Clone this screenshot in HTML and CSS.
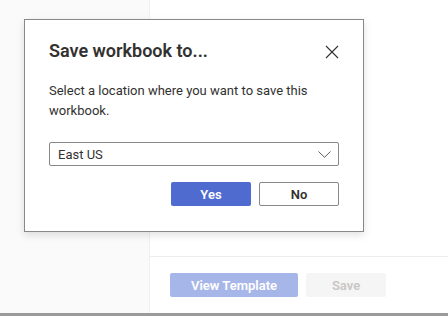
FILE: index.html
```html
<!DOCTYPE html>
<html lang="en">

<head>
    <meta charset="UTF-8">
    <meta name="viewport" content="width=device-width, initial-scale=1.0">
    <title>Save workbook</title>
    <link rel="stylesheet" href="styles.css">
</head>

<body>
    <div class="page">
        <div class="sidebar"></div>
        <div class="content">
            <div class="content-body"></div>
            <div class="footer">
                <button class="btn btn-primary-disabled wide">View Template</button>
                <button class="btn btn-disabled">Save</button>
            </div>
        </div>
    </div>

    <div class="dialog">
        <div class="dialog-header">
            <h2 class="dialog-title">Save workbook to...</h2>
            <button class="close-btn" aria-label="Close">
                <svg width="14" height="14" viewBox="0 0 14 14">
                    <path d="M1 1 L13 13 M13 1 L1 13" stroke="#323130" stroke-width="1.1" fill="none" />
                </svg>
            </button>
        </div>
        <p class="dialog-text">Select a location where you want to save this workbook.</p>
        <div class="select">
            <span>East US</span>
            <svg width="13" height="7" viewBox="0 0 13 7">
                <path d="M0.5 0.5 L6.5 6.3 L12.5 0.5" stroke="#605e5c" stroke-width="1" fill="none" />
            </svg>
        </div>
        <div class="dialog-actions">
            <button class="btn btn-primary">Yes</button>
            <button class="btn btn-default">No</button>
        </div>
    </div>
</body>

</html>
```

FILE: styles.css
```css
* {
    padding: 0;
    margin: 0;
    box-sizing: border-box;
}

body {
    width: 448px;
    height: 316px;
    overflow: hidden;
    font-family: Roboto, 'Open Sans', sans-serif;
    color: #323130;
    background: #ffffff;
}

.page {
    display: flex;
    height: 316px;
    border-bottom: 3px solid #9a9a9a;
}

.sidebar {
    width: 150px;
    background: #fafafa;
    border-right: 1px solid #f0f0f0;
}

.content {
    flex: 1;
    display: flex;
    flex-direction: column;
}

.content-body {
    flex: 1;
}

.footer {
    display: flex;
    gap: 8px;
    padding: 16px 20px;
    border-top: 1px solid #ededed;
}

.btn {
    height: 24px;
    width: 80px;
    font-family: inherit;
    font-size: 13px;
    font-weight: 600;
    border-radius: 2px;
    border: 1px solid transparent;
    cursor: pointer;
}

.btn.wide {
    width: 128px;
}

.btn-primary {
    background: #4f6bd0;
    color: #ffffff;
}

.btn-primary-disabled {
    background: #a7b6e8;
    color: #ffffff;
}

.btn-disabled {
    background: #f5f5f5;
    color: #c8c6c4;
}

.btn-default {
    background: #ffffff;
    color: #323130;
    border-color: #8a8886;
}

.dialog {
    position: absolute;
    top: 19px;
    left: 24px;
    width: 340px;
    height: 213px;
    background: #ffffff;
    border: 1px solid #8a8886;
    box-shadow: 0 3px 8px rgba(0, 0, 0, 0.12);
    padding: 17px 24px 0;
}

.dialog-header {
    display: flex;
    justify-content: space-between;
    align-items: center;
}

.dialog-title {
    font-size: 18px;
    font-weight: 600;
    line-height: 28px;
}

.close-btn {
    background: none;
    border: none;
    width: 14px;
    height: 14px;
    margin-top: 2px;
}

.dialog-text {
    margin-top: 16px;
    font-size: 13px;
    line-height: 20px;
}

.select {
    margin-top: 21px;
    height: 24px;
    display: flex;
    justify-content: space-between;
    align-items: center;
    padding: 0 7px 0 8px;
    border: 1px solid #8a8886;
    border-radius: 2px;
    font-size: 13px;
}

.dialog-actions {
    display: flex;
    justify-content: flex-end;
    gap: 8px;
    margin-top: 16px;
}
```
